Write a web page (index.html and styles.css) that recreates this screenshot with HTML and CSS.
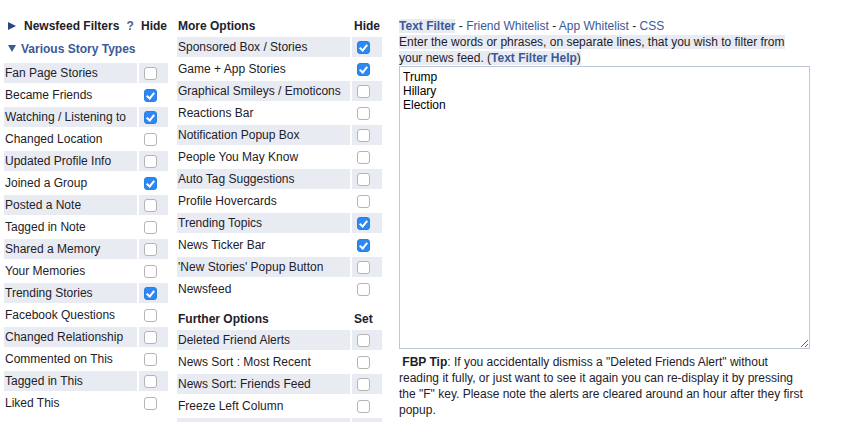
FILE: index.html
```html
<!DOCTYPE html>
<html>
<head>
<meta charset="utf-8">
<link rel="stylesheet" href="styles.css">
</head>
<body>
<div class="page">
  <div class="col-left">
    <table class="opts opts-left">
      <tr class="head">
        <td class="label"><svg class="tri" width="10" height="10" viewBox="0 0 10 10"><polygon points="1,1 9,5 1,9" fill="#2d4486"/></svg><span class="title">Newsfeed Filters</span><span class="q">?</span></td>
        <td class="hcol">Hide</td>
      </tr>
      <tr class="sub">
        <td colspan="2" class="label"><svg class="tri-down" width="10" height="10" viewBox="0 0 10 10"><polygon points="1,1 9,1 5,8" fill="#3b5998"/></svg><span class="subtitle">Various Story Types</span></td>
      </tr>
      <tr class="alt"><td class="label">Fan Page Stories</td><td class="box"><input type="checkbox"></td></tr>
      <tr><td class="label">Became Friends</td><td class="box"><input type="checkbox" checked></td></tr>
      <tr class="alt"><td class="label">Watching / Listening to</td><td class="box"><input type="checkbox" checked></td></tr>
      <tr><td class="label">Changed Location</td><td class="box"><input type="checkbox"></td></tr>
      <tr class="alt"><td class="label">Updated Profile Info</td><td class="box"><input type="checkbox"></td></tr>
      <tr><td class="label">Joined a Group</td><td class="box"><input type="checkbox" checked></td></tr>
      <tr class="alt"><td class="label">Posted a Note</td><td class="box"><input type="checkbox"></td></tr>
      <tr><td class="label">Tagged in Note</td><td class="box"><input type="checkbox"></td></tr>
      <tr class="alt"><td class="label">Shared a Memory</td><td class="box"><input type="checkbox"></td></tr>
      <tr><td class="label">Your Memories</td><td class="box"><input type="checkbox"></td></tr>
      <tr class="alt"><td class="label">Trending Stories</td><td class="box"><input type="checkbox" checked></td></tr>
      <tr><td class="label">Facebook Questions</td><td class="box"><input type="checkbox"></td></tr>
      <tr class="alt"><td class="label">Changed Relationship</td><td class="box"><input type="checkbox"></td></tr>
      <tr><td class="label">Commented on This</td><td class="box"><input type="checkbox"></td></tr>
      <tr class="alt"><td class="label">Tagged in This</td><td class="box"><input type="checkbox"></td></tr>
      <tr><td class="label">Liked This</td><td class="box"><input type="checkbox"></td></tr>
    </table>
  </div>
  <div class="col-mid">
    <table class="opts opts-mid">
      <tr class="head"><td class="label plain">More Options</td><td class="hcol">Hide</td></tr>
      <tr class="alt"><td class="label">Sponsored Box / Stories</td><td class="box"><input type="checkbox" checked></td></tr>
      <tr><td class="label">Game + App Stories</td><td class="box"><input type="checkbox" checked></td></tr>
      <tr class="alt"><td class="label">Graphical Smileys / Emoticons</td><td class="box"><input type="checkbox"></td></tr>
      <tr><td class="label">Reactions Bar</td><td class="box"><input type="checkbox"></td></tr>
      <tr class="alt"><td class="label">Notification Popup Box</td><td class="box"><input type="checkbox"></td></tr>
      <tr><td class="label">People You May Know</td><td class="box"><input type="checkbox"></td></tr>
      <tr class="alt"><td class="label">Auto Tag Suggestions</td><td class="box"><input type="checkbox"></td></tr>
      <tr><td class="label">Profile Hovercards</td><td class="box"><input type="checkbox"></td></tr>
      <tr class="alt"><td class="label">Trending Topics</td><td class="box"><input type="checkbox" checked></td></tr>
      <tr><td class="label">News Ticker Bar</td><td class="box"><input type="checkbox" checked></td></tr>
      <tr class="alt"><td class="label">'New Stories' Popup Button</td><td class="box"><input type="checkbox"></td></tr>
      <tr><td class="label">Newsfeed</td><td class="box"><input type="checkbox"></td></tr>
    </table>
    <table class="opts opts-mid further">
      <tr class="head"><td class="label plain">Further Options</td><td class="hcol">Set</td></tr>
      <tr class="alt"><td class="label">Deleted Friend Alerts</td><td class="box"><input type="checkbox"></td></tr>
      <tr><td class="label">News Sort : Most Recent</td><td class="box"><input type="checkbox"></td></tr>
      <tr class="alt"><td class="label">News Sort: Friends Feed</td><td class="box"><input type="checkbox"></td></tr>
      <tr><td class="label">Freeze Left Column</td><td class="box"><input type="checkbox"></td></tr>
      <tr class="alt"><td class="label">&nbsp;</td><td class="box"></td></tr>
    </table>
  </div>
  <div class="col-right">
    <div class="tabs"><span class="tab-active">Text Filter</span> - <a class="tab">Friend Whitelist</a> - <a class="tab">App Whitelist</a> - <a class="tab">CSS</a></div>
    <div class="desc"><span class="hl">Enter the words or phrases, on separate lines, that you wish to filter from your news feed. (<a class="help">Text Filter Help</a>)</span></div>
    <textarea class="filter">Trump
Hillary
Election</textarea>
    <p class="tip">&nbsp;<b>FBP Tip</b>: If you accidentally dismiss a "Deleted Friends Alert" without reading it fully, or just want to see it again you can re-display it by pressing the "F" key. Please note the alerts are cleared around an hour after they first popup.</p>
  </div>
</div>
</body>
</html>
```

FILE: styles.css
```css
html, body {
  margin: 0;
  padding: 0;
  background: #ffffff;
}
body {
  font-family: "Liberation Sans", Arial, Helvetica, sans-serif;
  font-size: 12px;
  color: #1d2129;
}
.page {
  display: flex;
  align-items: flex-start;
  padding: 13px 0 0 2px;
}
.opts {
  border-collapse: separate;
  border-spacing: 2px;
}
.opts td {
  height: 20px;
  padding: 0 1px;
  vertical-align: middle;
  white-space: nowrap;
}
.opts-left .label { width: 131px; }
.opts-left .box, .opts-left .hcol { width: 26px; }
.opts-mid .label { width: 171px; }
.opts-mid .box, .opts-mid .hcol { width: 27px; }
.col-mid {
  margin-left: 5px;
}
.further {
  margin-top: 5px;
}
tr.alt td {
  background: #e9ebf2;
}
.opts tr.head td {
  font-weight: bold;
  height: 18px;
  padding-top: 2px;
}
.opts tr.head td.hcol {
  padding-left: 2px;
}
.tri {
  display: inline-block;
  vertical-align: -1px;
  margin: 0 7px 0 2px;
}
.tri-down {
  display: inline-block;
  vertical-align: -1px;
  margin: 0 4px 0 2px;
}
.title {
  font-weight: bold;
}
.q {
  font-weight: bold;
  color: #4b5f8f;
  margin-left: 7px;
}
.opts tr.sub td {
  height: 24px;
  padding-bottom: 1px;
  box-sizing: border-box;
}
.subtitle {
  font-weight: bold;
  color: #3b5998;
}
input[type="checkbox"] {
  -webkit-appearance: none;
  appearance: none;
  width: 13px;
  height: 13px;
  margin: 0 3px 0 4px;
  border: 1px solid #b4b4b4;
  border-radius: 3px;
  background: #ffffff;
  box-sizing: border-box;
  vertical-align: middle;
  position: relative;
  display: inline-block;
}
input[type="checkbox"]:checked {
  background: #2d88f3;
  border-color: #2a7fe6;
}
input[type="checkbox"]:checked::after {
  content: "";
  position: absolute;
  left: 3px;
  top: 1px;
  width: 3px;
  height: 6px;
  border: solid #ffffff;
  border-width: 0 2px 2px 0;
  transform: rotate(40deg);
}
.col-right {
  margin-left: 15px;
  margin-top: 5px;
  width: 411px;
  line-height: 16px;
}
.tabs {
  color: #1d2129;
}
.tab-active {
  font-weight: bold;
  color: #3b5998;
  background: #e9ebf2;
}
.tab, .help {
  color: #3b5998;
  text-decoration: none;
}
.help {
  font-weight: bold;
}
.hl {
  background: #e9ebf2;
}
.filter {
  display: block;
  box-sizing: border-box;
  width: 411px;
  height: 283px;
  margin: 0;
  padding: 3px 3px;
  border: 1px solid #bdc7d8;
  font-family: "Liberation Sans", Arial, Helvetica, sans-serif;
  font-size: 12px;
  line-height: 14px;
  color: #000000;
  resize: both;
}
.tip {
  margin: 5px 0 0 0;
  line-height: 16px;
}
```
